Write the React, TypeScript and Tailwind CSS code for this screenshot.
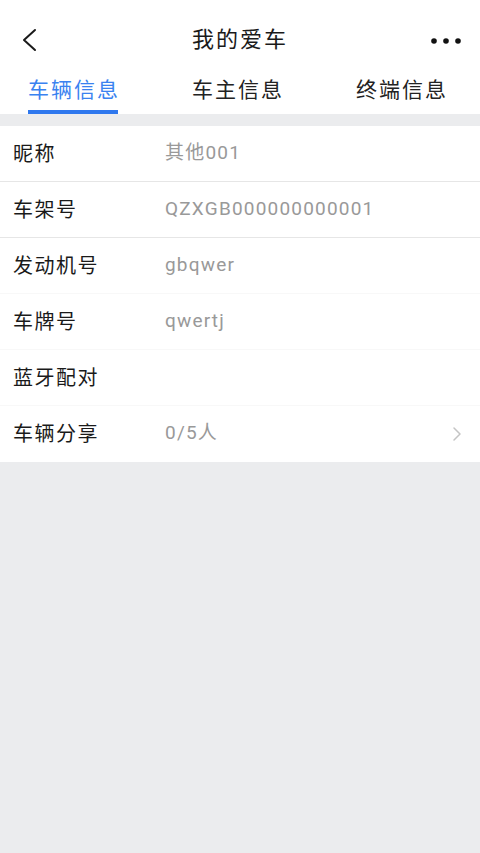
import React from 'react';

const rows = [
  { label: '昵称', value: '其他001', line: 'border-[#e6e6e6]' },
  { label: '车架号', value: 'QZXGB000000000001', line: 'border-[#e6e6e6]' },
  { label: '发动机号', value: 'gbqwer', line: 'border-[#f8f8f8]' },
  { label: '车牌号', value: 'qwertj', line: 'border-[#f8f8f8]' },
  { label: '蓝牙配对', value: '', line: 'border-[#f8f8f8]' },
  { label: '车辆分享', value: '0/5人', line: 'border-transparent', arrow: true },
];

const tabs = ['车辆信息', '车主信息', '终端信息'];

export default function App() {
  return (
    <div className="min-h-[853px] w-[480px] bg-[#ebecee] flex flex-col font-['Roboto','Noto_Sans_CJK_SC',sans-serif]">
      {/* 顶部导航 */}
      <div className="bg-white">
        <div className="h-[79px] flex items-center justify-between pl-[20px] pr-[18px] relative">
          <svg width="18" height="26" viewBox="0 0 18 26" fill="none" className="mt-[1px]">
            <path d="M15 3 L4 13 L15 23" stroke="#1a1a1a" strokeWidth="2" strokeLinecap="round" strokeLinejoin="round" />
          </svg>
          <div className="absolute left-0 right-0 text-center text-[22px] tracking-[2px] text-[#1a1a1a] pointer-events-none">我的爱车</div>
          <svg width="32" height="8" viewBox="0 0 32 8" className="mt-[2px]">
            <circle cx="4" cy="4" r="2.8" fill="#111" />
            <circle cx="16" cy="4" r="2.8" fill="#111" />
            <circle cx="28" cy="4" r="2.8" fill="#111" />
          </svg>
        </div>
        <div className="flex justify-between pl-[26px] pr-[32px] h-[35px]">
          {tabs.map((t, i) => (
            <div key={t} className="flex flex-col items-center">
              <span className={`text-[21px] leading-[22px] tracking-[2px] pl-[2px] ${i === 0 ? 'text-[#3a82f0]' : 'text-[#222]'}`}>{t}</span>
              {i === 0 && <div className="mt-[9px] h-1 w-[90px] bg-[#2f78ee]" />}
            </div>
          ))}
        </div>
      </div>

      <div className="h-3" />

      {/* 车辆信息列表 */}
      <div className="bg-white">
        {rows.map((r) => (
          <div key={r.label} className={`h-14 flex items-center pl-[13px] pr-[18px] border-b ${r.line}`}>
            <span className="w-[152px] text-[20px] tracking-[1.5px] text-[#1a1a1a]">{r.label}</span>
            <span className="flex-1 text-[19px] tracking-[1.2px] text-[#999]">{r.value}</span>
            {r.arrow && (
              <svg width="10" height="16" viewBox="0 0 10 16" fill="none">
                <path d="M2 2 L8 8 L2 14" stroke="#c4c4c4" strokeWidth="1.5" strokeLinecap="round" strokeLinejoin="round" />
              </svg>
            )}
          </div>
        ))}
      </div>
    </div>
  );
}
